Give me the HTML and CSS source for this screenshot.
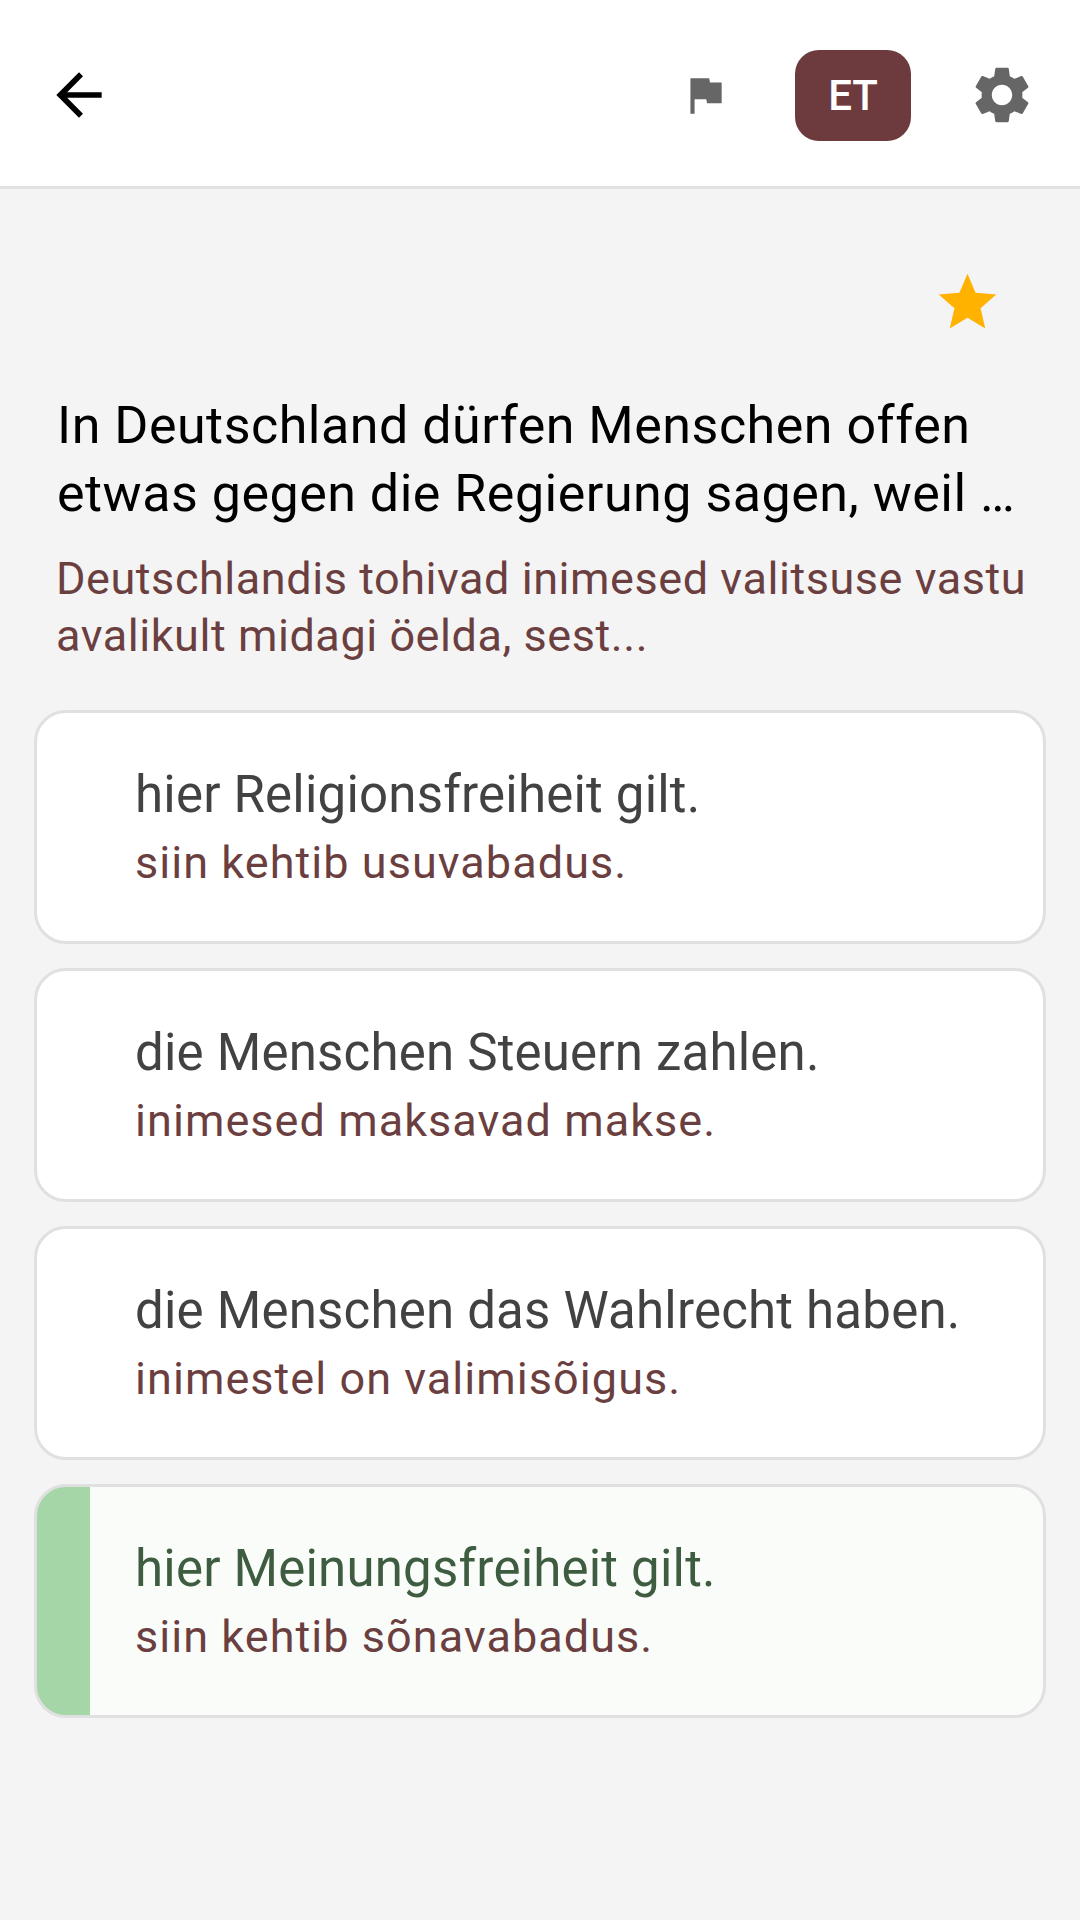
FILE: index.html
```html
<!DOCTYPE html>
<html lang="de">
<head>
  <meta charset="UTF-8">
  <meta name="viewport" content="width=device-width, initial-scale=1.0">
  <title>Frage</title>
  <link rel="stylesheet" href="styles.css">
</head>
<body>

  <header class="top-bar">
    <svg class="back-icon" viewBox="0 0 24 24"><path d="M20 11H7.83l5.59-5.59L12 4l-8 8 8 8 1.41-1.41L7.83 13H20v-2z"/></svg>
    <svg class="flag-icon" viewBox="0 0 24 24"><path d="M14.4 6L14 4H5v17h2v-7h5.6l.4 2h7V6z"/></svg>
    <div class="lang-button">ET</div>
    <svg class="gear-icon" viewBox="0 0 24 24"><path d="M19.14 12.94c.04-.3.06-.61.06-.94 0-.32-.02-.64-.07-.94l2.03-1.58c.18-.14.23-.41.12-.61l-1.92-3.32c-.12-.22-.37-.29-.59-.22l-2.39.96c-.5-.38-1.03-.7-1.62-.94l-.36-2.54c-.04-.24-.24-.41-.48-.41h-3.84c-.24 0-.43.17-.47.41l-.36 2.54c-.59.24-1.13.57-1.62.94l-2.39-.96c-.22-.08-.47 0-.59.22L2.74 8.87c-.12.21-.08.47.12.61l2.03 1.58c-.05.3-.09.63-.09.94s.02.64.07.94l-2.03 1.58c-.18.14-.23.41-.12.61l1.92 3.32c.12.22.37.29.59.22l2.39-.96c.5.38 1.03.7 1.62.94l.36 2.54c.05.24.24.41.48.41h3.84c.24 0 .44-.17.47-.41l.36-2.54c.59-.24 1.13-.56 1.62-.94l2.39.96c.22.08.47 0 .59-.22l1.92-3.32c.12-.22.07-.47-.12-.61l-2.01-1.58zM12 15.6c-1.98 0-3.6-1.62-3.6-3.6s1.62-3.6 3.6-3.6 3.6 1.62 3.6 3.6-1.62 3.6-3.6 3.6z"/></svg>
  </header>

  <main class="content">
    <div class="star-row">
      <svg class="star-icon" viewBox="0 0 24 24"><path d="M12 17.27L18.18 21l-1.64-7.03L22 9.24l-7.19-.61L12 2 9.19 8.63 2 9.24l5.46 4.73L5.82 21z"/></svg>
    </div>

    <div class="question">
      <h1>In Deutschland dürfen Menschen offen etwas gegen die Regierung sagen, weil …</h1>
      <p>Deutschlandis tohivad inimesed valitsuse vastu avalikult midagi öelda, sest...</p>
    </div>

    <div class="answers">
      <div class="answer">
        <div class="answer-text">hier Religionsfreiheit gilt.</div>
        <div class="answer-sub">siin kehtib usuvabadus.</div>
      </div>
      <div class="answer">
        <div class="answer-text">die Menschen Steuern zahlen.</div>
        <div class="answer-sub">inimesed maksavad makse.</div>
      </div>
      <div class="answer">
        <div class="answer-text">die Menschen das Wahlrecht haben.</div>
        <div class="answer-sub">inimestel on valimisõigus.</div>
      </div>
      <div class="answer correct">
        <div class="answer-text">hier Meinungsfreiheit gilt.</div>
        <div class="answer-sub">siin kehtib sõnavabadus.</div>
      </div>
    </div>
  </main>

</body>
</html>
```

FILE: styles.css
```css
* {
  box-sizing: border-box;
}

body {
  margin: 0;
  height: 1920px;
  background-color: #f4f4f4;
  font-family: Roboto, sans-serif;
}

.top-bar {
  display: flex;
  align-items: center;
  height: 189px;
  padding: 4px 44px 0 45px;
  background-color: #ffffff;
  border-bottom: 3px solid #e2e2e2;
}

.back-icon {
  width: 68px;
  height: 68px;
  fill: #000000;
}

.flag-icon {
  width: 50px;
  height: 50px;
  margin-left: auto;
  fill: #666666;
}

.gear-icon {
  width: 68px;
  height: 68px;
  margin-left: 57px;
  fill: #666666;
}

.lang-button {
  display: flex;
  align-items: center;
  justify-content: center;
  width: 116px;
  height: 91px;
  margin-left: 65px;
  border-radius: 24px;
  background-color: #6d3b3d;
  color: #ffffff;
  font-size: 42px;
  font-weight: 500;
  font-family: Roboto, sans-serif;
}

.content {
  padding: 0 34px;
}

.star-row {
  display: flex;
  justify-content: flex-end;
  padding: 79px 44px 0 0;
}

.star-icon {
  width: 69px;
  height: 69px;
  fill: #ffb300;
}

.question {
  padding: 55px 12px 0 23px;
}

.question h1 {
  margin: 0;
  font-size: 52px;
  font-weight: 400;
  line-height: 68px;
  letter-spacing: 0.5px;
  color: #000000;
}

.question p {
  margin: 22px 0 0 -1px;
  font-size: 45px;
  line-height: 57px;
  letter-spacing: 0.55px;
  color: #6b3f40;
}

.answers {
  display: flex;
  flex-direction: column;
  gap: 24px;
  margin-top: 46px;
}

.answer {
  display: flex;
  flex-direction: column;
  justify-content: center;
  height: 234px;
  padding-left: 98px;
  border: 3px solid #e0e0e0;
  border-radius: 32px;
  background-color: #ffffff;
}

.answer-text {
  font-size: 51px;
  line-height: 66px;
  letter-spacing: 0.2px;
  color: #424242;
}

.answer-sub {
  margin-top: 5px;
  font-size: 45px;
  line-height: 60px;
  letter-spacing: 1.05px;
  color: #6b3f40;
}

.correct {
  background: linear-gradient(90deg, #a5d6a7 0 53px, #fafcfa 53px);
}

.correct .answer-text {
  color: #3e5c40;
}
```
